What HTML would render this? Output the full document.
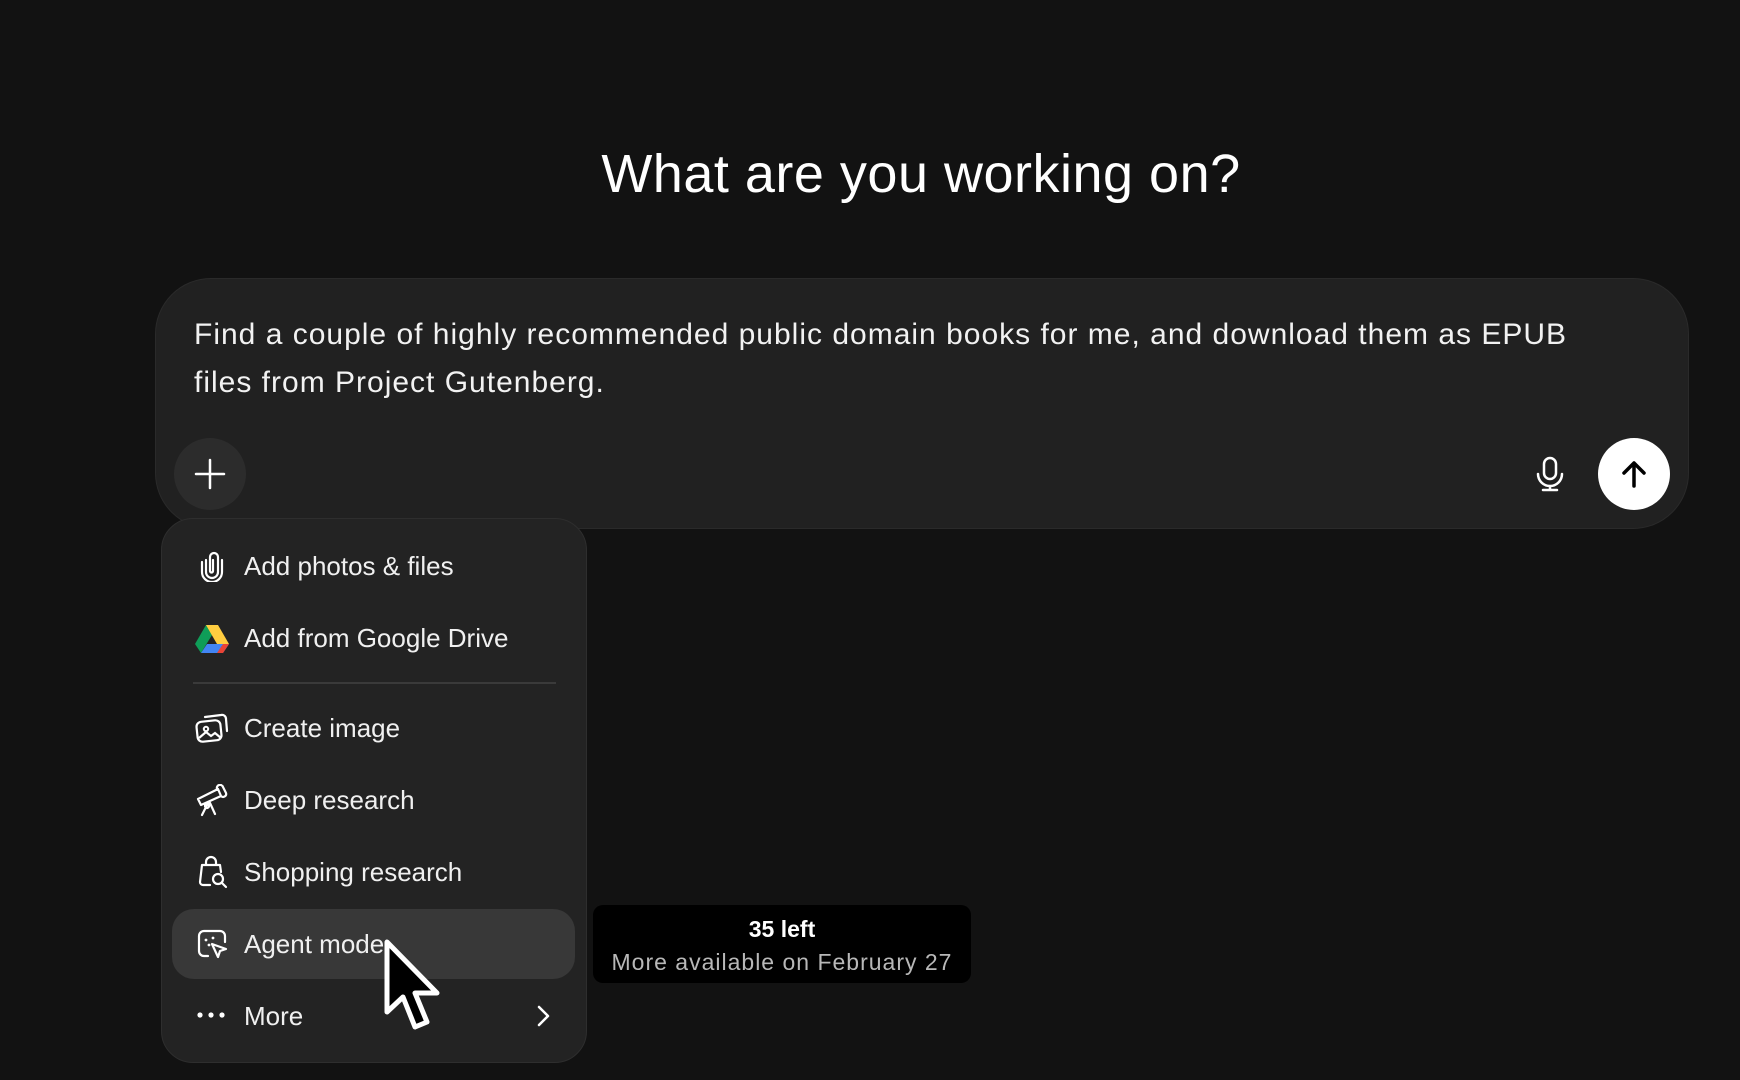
<!DOCTYPE html>
<html><head><meta charset="utf-8"><style>
*{margin:0;padding:0;box-sizing:border-box}
body{width:1740px;height:1080px;background:#121212;font-family:"Liberation Sans",sans-serif;color:#fff;position:relative;overflow:hidden}
.title{position:absolute;top:143px;left:0;width:1842px;text-align:center;font-size:54px;letter-spacing:0.5px}
.comp{position:absolute;left:155px;top:278px;width:1534px;height:251px;background:#212121;border:1px solid #2a2a2a;border-radius:56px}
.ptext{position:absolute;left:194px;top:311px;font-size:30px;line-height:48px;color:#f2f2f2;white-space:nowrap;letter-spacing:1px}
.plus{position:absolute;left:174px;top:438px;width:72px;height:72px;border-radius:50%;background:#2c2c2c}
.send{position:absolute;left:1598px;top:438px;width:72px;height:72px;border-radius:50%;background:#fff}
.menu{position:absolute;left:161px;top:518px;width:426px;height:545px;background:#232323;border:1px solid #2e2e2e;border-radius:32px}
.item{position:absolute;left:244px;font-size:26px;color:#f0f0f0;letter-spacing:0}
.hl{position:absolute;left:172px;top:909px;width:403px;height:70px;background:#383838;border-radius:22px}
.div{position:absolute;left:193px;top:682px;width:363px;height:2px;background:#3a3a3a}
.tip{position:absolute;left:593px;top:905px;width:378px;height:78px;background:#000;border-radius:10px;text-align:center}
svg.i{position:absolute}
</style></head><body>
<div class="title">What are you working on?</div>
<div class="comp"></div>
<div class="ptext">Find a couple of highly recommended public domain books for me, and download them as EPUB<br>files from Project Gutenberg.</div>
<div class="plus"></div>
<svg class="i" style="left:194px;top:458px" width="32" height="32" viewBox="0 0 32 32"><path d="M16 2v28M2 16h28" stroke="#fff" stroke-width="2.5" stroke-linecap="round"/></svg>
<svg class="i" style="left:1534px;top:456px" width="32" height="36" viewBox="0 0 32 36"><rect x="10" y="2" width="12" height="21" rx="6" fill="none" stroke="#fff" stroke-width="2.5"/><path d="M4 18a12 12 0 0 0 24 0M16 30v4M9 34h14" fill="none" stroke="#fff" stroke-width="2.5" stroke-linecap="round"/></svg>
<div class="send"></div>
<svg class="i" style="left:1618px;top:458px" width="32" height="32" viewBox="0 0 32 32"><path d="M16 28V5M6 15l10-10 10 10" fill="none" stroke="#000" stroke-width="3.5" stroke-linecap="round" stroke-linejoin="round"/></svg>

<div class="menu"></div>
<div class="hl"></div>
<div class="div"></div>
<svg class="i" style="left:197px;top:550px" width="30" height="32" viewBox="0 0 30 32"><path d="M9 10v12a6 6 0 0 0 12 0V7a4 4 0 0 0-8 0v14a1.5 1.5 0 0 0 3 0V10M5 12v10a10 10 0 0 0 20 0V10" fill="none" stroke="#fff" stroke-width="2.2" stroke-linecap="round"/></svg>
<div class="item" style="top:551px">Add photos &amp; files</div>
<svg class="i" style="left:195px;top:624px" width="34" height="30" viewBox="0 0 34 30"><path d="M11 1h12l-6 10.5z" fill="#f4b400"/><path d="M11 1L0 20l6 9 11-18z" fill="#0f9d58"/><path d="M23 1l11 19H22L11 1z" fill="#ffcd40"/><path d="M6 29h22l6-9H12z" fill="#4285f4"/><path d="M34 20l-6 9H22l6-9z" fill="#ea4335"/></svg>
<div class="item" style="top:623px">Add from Google Drive</div>
<svg class="i" style="left:195px;top:712px" width="34" height="32" viewBox="0 0 34 32"><rect x="2" y="9" width="24" height="20" rx="5" fill="none" stroke="#fff" stroke-width="2.2" transform="rotate(-6 14 19)"/><path d="M10 5l16-2a4 4 0 0 1 5 4l1 12" fill="none" stroke="#fff" stroke-width="2.2" stroke-linecap="round"/><circle cx="11" cy="17" r="2.2" fill="none" stroke="#fff" stroke-width="2"/><path d="M4 26l7-6 5 4 4-3 6 5" fill="none" stroke="#fff" stroke-width="2.2"/></svg>
<div class="item" style="top:713px">Create image</div>
<svg class="i" style="left:195px;top:784px" width="34" height="34" viewBox="0 0 34 34"><path d="M3 15l20-10 3 7-20 9zM3 15l3 6M22 5a3 3 0 0 1 6-2l3 6a3 3 0 0 1-5 3M13 19l-6 12M15 19l5 11M14 22a2 2 0 1 1 0-.1" fill="none" stroke="#fff" stroke-width="2.2" stroke-linejoin="round" stroke-linecap="round"/></svg>
<div class="item" style="top:785px">Deep research</div>
<svg class="i" style="left:196px;top:855px" width="34" height="34" viewBox="0 0 34 34"><path d="M10 10V7a5 5 0 0 1 10 0v3M14 30H7a3 3 0 0 1-3-3l2-17h18l1 7" fill="none" stroke="#fff" stroke-width="2.2" stroke-linecap="round" stroke-linejoin="round"/><circle cx="22" cy="24" r="5" fill="none" stroke="#fff" stroke-width="2.2"/><path d="M26 28l4 4" stroke="#fff" stroke-width="2.2" stroke-linecap="round"/></svg>
<div class="item" style="top:857px">Shopping research</div>
<svg class="i" style="left:196px;top:928px" width="34" height="32" viewBox="0 0 34 32"><path d="M12 28H8a5 5 0 0 1-5-5V8a5 5 0 0 1 5-5h16a5 5 0 0 1 5 5v6" fill="none" stroke="#fff" stroke-width="2.2" stroke-linecap="round"/><path d="M16 16l14 5-6 2-2 6z" fill="none" stroke="#fff" stroke-width="2.2" stroke-linejoin="round"/><circle cx="10" cy="12" r="1.4" fill="#fff"/><circle cx="13" cy="17" r="1.4" fill="#fff"/><circle cx="17" cy="10" r="1.4" fill="#fff"/></svg>
<div class="item" style="top:929px">Agent mode</div>
<svg class="i" style="left:196px;top:1010px" width="32" height="10" viewBox="0 0 32 10"><circle cx="4" cy="5" r="2.6" fill="#fff"/><circle cx="15" cy="5" r="2.6" fill="#fff"/><circle cx="26" cy="5" r="2.6" fill="#fff"/></svg>
<div class="item" style="top:1001px">More</div>
<svg class="i" style="left:534px;top:1004px" width="18" height="24" viewBox="0 0 18 24"><path d="M5 3l9 9-9 9" fill="none" stroke="#fff" stroke-width="2.5" stroke-linecap="round" stroke-linejoin="round"/></svg>

<div class="tip"><div style="font-size:23px;font-weight:bold;margin-top:11px">35 left</div><div style="font-size:23px;color:#b8b8b8;margin-top:6px;letter-spacing:1px">More available on February 27</div></div>

<svg class="i" style="left:383px;top:938px" width="62" height="96" viewBox="0 0 62 96"><path d="M4 4v70l16-15 12 30 12-5-12-29h22z" fill="#000" stroke="#fff" stroke-width="5" stroke-linejoin="round"/></svg>
</body></html>
